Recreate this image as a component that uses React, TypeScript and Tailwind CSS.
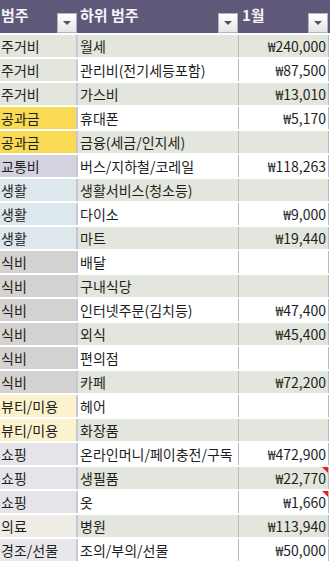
import React from "react"

interface Row {
  cat: string
  sub: string
  amount: string
  note?: boolean
}

const catColor: Record<string, string> = {
  "주거비": "bg-[#e2e6dc]",
  "공과금": "bg-[#f8da55]",
  "교통비": "bg-[#d5d2e0]",
  "생활": "bg-[#dde8ec]",
  "식비": "bg-[#d5d3d1]",
  "뷰티/미용": "bg-[#fcf2cd]",
  "쇼핑": "bg-[#e5e4eb]",
  "의료": "bg-[#eeece4]",
  "경조/선물": "bg-[#e8e8ec]",
}

const rows: Row[] = [
  { cat: "주거비", sub: "월세", amount: "₩240,000" },
  { cat: "주거비", sub: "관리비(전기세등포함)", amount: "₩87,500" },
  { cat: "주거비", sub: "가스비", amount: "₩13,010" },
  { cat: "공과금", sub: "휴대폰", amount: "₩5,170" },
  { cat: "공과금", sub: "금융(세금/인지세)", amount: "" },
  { cat: "교통비", sub: "버스/지하철/코레일", amount: "₩118,263" },
  { cat: "생활", sub: "생활서비스(청소등)", amount: "" },
  { cat: "생활", sub: "다이소", amount: "₩9,000" },
  { cat: "생활", sub: "마트", amount: "₩19,440" },
  { cat: "식비", sub: "배달", amount: "" },
  { cat: "식비", sub: "구내식당", amount: "" },
  { cat: "식비", sub: "인터넷주문(김치등)", amount: "₩47,400" },
  { cat: "식비", sub: "외식", amount: "₩45,400" },
  { cat: "식비", sub: "편의점", amount: "" },
  { cat: "식비", sub: "카페", amount: "₩72,200" },
  { cat: "뷰티/미용", sub: "헤어", amount: "" },
  { cat: "뷰티/미용", sub: "화장품", amount: "" },
  { cat: "쇼핑", sub: "온라인머니/페이충전/구독", amount: "₩472,900" },
  { cat: "쇼핑", sub: "생필품", amount: "₩22,770", note: true },
  { cat: "쇼핑", sub: "옷", amount: "₩1,660", note: true },
  { cat: "의료", sub: "병원", amount: "₩113,940" },
  { cat: "경조/선물", sub: "조의/부의/선물", amount: "₩50,000" },
]

function FilterButton() {
  return (
    <div className="absolute right-0 bottom-0 w-[20px] h-[20px] border border-[#b4b4bf] bg-gradient-to-b from-white to-[#e6e6ea] flex items-center justify-center">
      <div className="w-0 h-0 border-l-[4px] border-r-[4px] border-t-[4px] border-l-transparent border-r-transparent border-t-[#555]" />
    </div>
  )
}

export default function App() {
  return (
    <div
      className="w-[330px] h-[561px] bg-white overflow-hidden text-[#1e1e1e] text-[14px]"
      style={{ fontFamily: '"Noto Sans CJK KR", "Noto Sans", sans-serif' }}
    >
      {/* header */}
      <div className="flex h-[33px] bg-[#605878] text-[#f4f4f8] font-bold text-[15px]">
        <div className="relative w-[77px] pl-[1px] leading-[30px]">
          범주
          <FilterButton />
        </div>
        <div className="relative w-[161px] pl-[3px] leading-[30px]">
          하위 범주
          <FilterButton />
        </div>
        <div className="relative w-[90px] pl-[4px] leading-[30px]">
          1월
          <FilterButton />
        </div>
      </div>

      <div className="flex flex-col gap-[2px] pt-[2px]">
        {rows.map((r, i) => {
          const band = i % 2 === 0 ? "bg-[#e2e6dc]" : "bg-white"
          return (
            <div key={i} className="flex h-[22px] leading-[22px]">
              <div className={`w-[76px] pl-[1px] whitespace-nowrap ${catColor[r.cat]}`}>
                {r.cat}
              </div>
              <div className="w-[2px] bg-[#c8c8d4]" />
              <div className={`w-[160px] pl-[2px] whitespace-nowrap overflow-hidden ${band}`}>
                {r.sub}
              </div>
              <div className="w-[1px] bg-[#b8b8c4]" />
              <div className={`relative w-[89px] pr-[2px] text-right ${band}`}>
                {r.amount}
                {r.note && (
                  <div className="absolute right-0 top-0 w-0 h-0 border-l-[6px] border-b-[6px] border-l-transparent border-b-transparent border-r-0 border-t-[6px] border-t-[#e8201a]" />
                )}
              </div>
              <div className="w-[1px] bg-[#b8b8c4]" />
            </div>
          )
        })}
      </div>
    </div>
  )
}
